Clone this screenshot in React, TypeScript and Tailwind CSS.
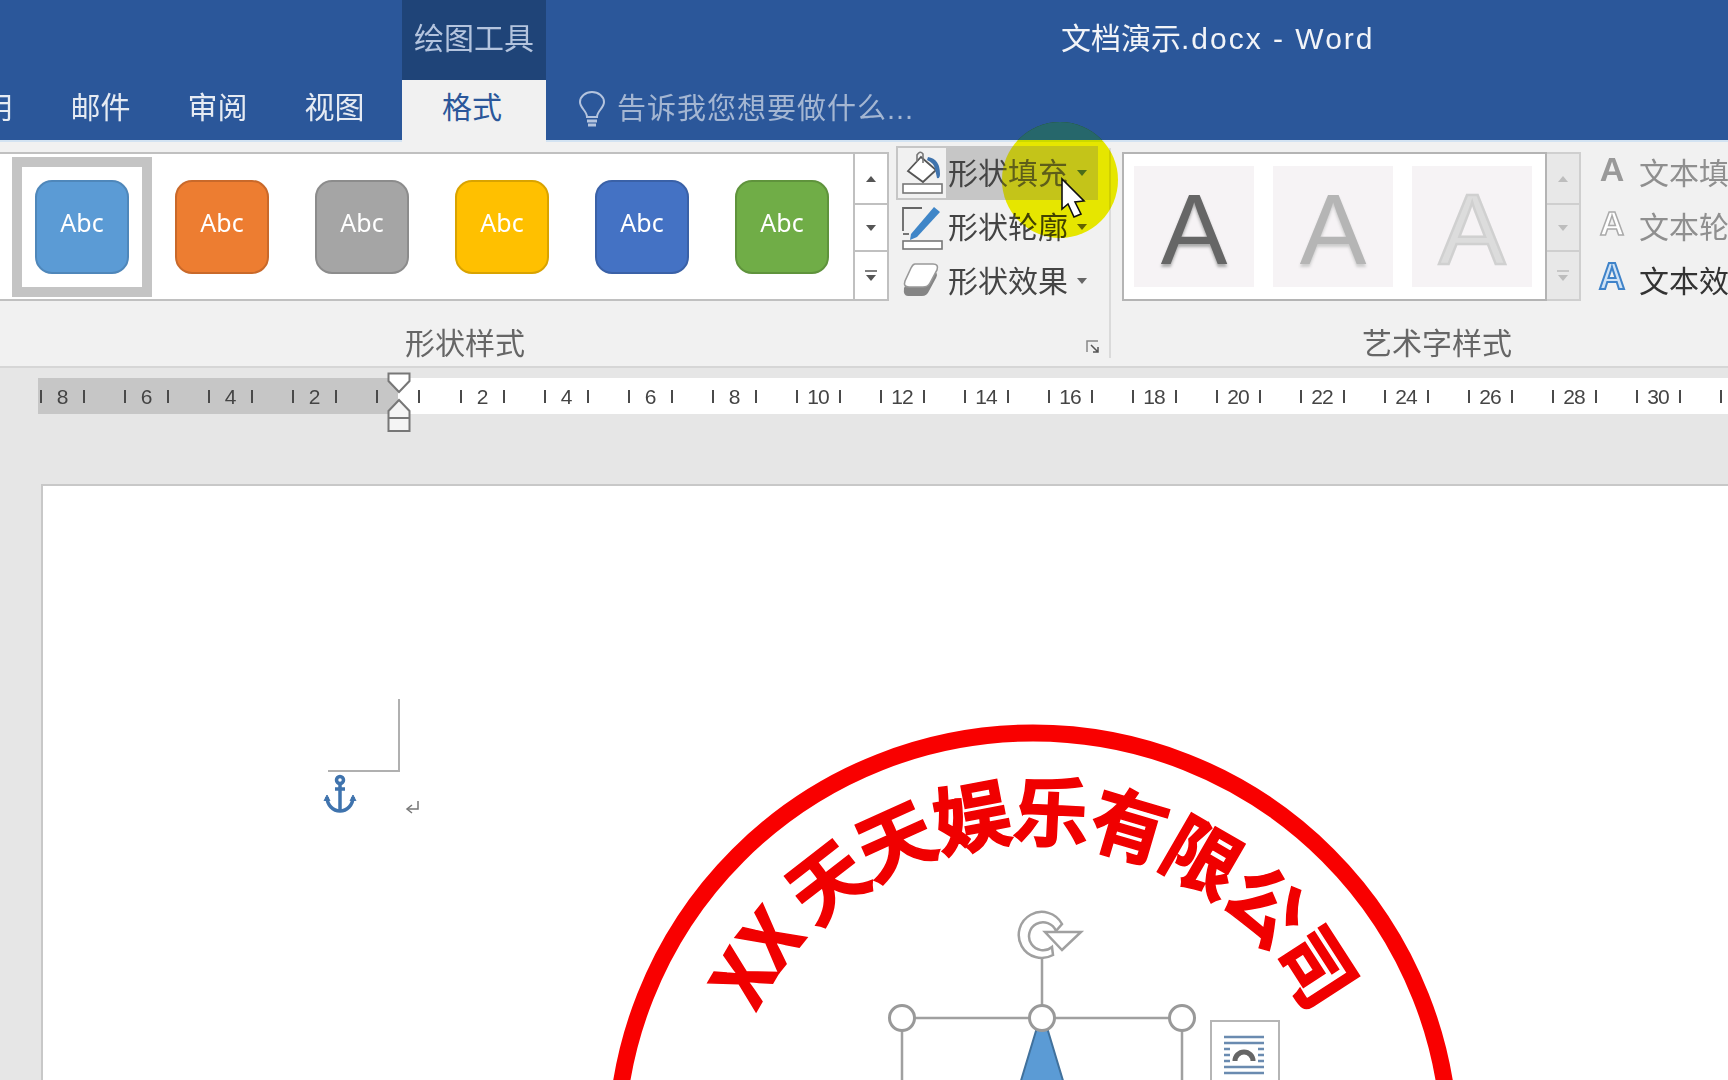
const cjk = "font-['Liberation_Sans','Noto_Sans_CJK_SC',sans-serif]";

const styles = [
  { bg: 'bg-[#5b9bd5]', border: 'border-[#4f87ba]', selected: true },
  { bg: 'bg-[#ed7d31]', border: 'border-[#c9692a]', selected: false },
  { bg: 'bg-[#a5a5a5]', border: 'border-[#8c8c8c]', selected: false },
  { bg: 'bg-[#ffc000]', border: 'border-[#d9a300]', selected: false },
  { bg: 'bg-[#4472c4]', border: 'border-[#3a61a7]', selected: false },
  { bg: 'bg-[#70ad47]', border: 'border-[#5f933c]', selected: false },
];

function Up({ color = '#555' }: { color?: string }) {
  return (
    <svg width="12" height="8" viewBox="0 0 12 8">
      <path d="M6 1 L11 7 H1 Z" fill={color} />
    </svg>
  );
}

function Down({ color = '#555' }: { color?: string }) {
  return (
    <svg width="12" height="8" viewBox="0 0 12 8">
      <path d="M1 1 H11 L6 7 Z" fill={color} />
    </svg>
  );
}

function More({ color = '#555' }: { color?: string }) {
  return (
    <svg width="14" height="14" viewBox="0 0 14 14">
      <path d="M1 2 H13" stroke={color} strokeWidth="1.5" />
      <path d="M2 6 H12 L7 12 Z" fill={color} />
    </svg>
  );
}

function Scroller({ muted }: { muted?: boolean }) {
  const color = muted ? '#bdbdbd' : '#555';
  const line = muted ? 'border-[#cfcfcf]' : 'border-[#c0c0c0]';
  return (
    <div className={`flex h-[149px] w-[34px] flex-col border-2 border-l-0 ${line} ${muted ? 'bg-[#e8e8e8]' : 'bg-white'}`}>
      <div className={`flex h-[51px] items-center justify-center border-b-2 ${line}`}>
        <Up color={color} />
      </div>
      <div className={`flex h-[47px] items-center justify-center border-b-2 ${line}`}>
        <Down color={color} />
      </div>
      <div className="flex flex-1 items-center justify-center">
        <More color={color} />
      </div>
    </div>
  );
}

function FillIcon() {
  return (
    <svg width="46" height="46" viewBox="0 0 46 46">
      <path d="M9 21 L22 7 L37 20 L24 32 Z" fill="#fff" stroke="#555" strokeWidth="1.8" />
      <path d="M18 12 V5 Q21 0 24 4 V13" fill="none" stroke="#777" strokeWidth="1.6" />
      <path d="M29 7 Q41 9 41 24 Q41 29 38 28 L36 19 Q35 13 28 10 Z" fill="#3f73ad" />
      <rect x="4" y="34" width="39" height="9" fill="#fff" stroke="#777" strokeWidth="1.6" />
    </svg>
  );
}

function OutlineIcon() {
  return (
    <svg width="46" height="46" viewBox="0 0 46 46">
      <path d="M23 4 H4 V27" fill="none" stroke="#666" strokeWidth="1.8" />
      <path d="M12 30 L35 3 L41 8 L18 33 L11 36 Z" fill="#3f86c8" />
      <path d="M4 30 H10" stroke="#666" strokeWidth="1.8" />
      <rect x="4" y="37" width="39" height="8" fill="#fff" stroke="#777" strokeWidth="1.6" />
    </svg>
  );
}

function EffectIcon() {
  return (
    <svg width="46" height="46" viewBox="0 0 46 46">
      <path d="M16 14 H34 Q40 14 37 20 L30 33 Q28 38 23 38 H9 Q4 38 5 30 L12 18 Q14 14 16 14 Z" fill="#858585" />
      <path d="M16 6 H34 Q40 6 38 12 L31 25 Q29 29 24 29 H10 Q4 29 6 23 L12 10 Q14 6 16 6 Z" fill="#fff" stroke="#999" strokeWidth="1.6" />
    </svg>
  );
}

function ShapeButton({ label, hover, icon }: { label: string; hover?: boolean; icon: React.ReactNode }) {
  return (
    <div className={`flex h-[54px] w-[202px] items-center ${hover ? 'bg-[#c6c6c6]' : ''}`}>
      <div className={`flex h-[54px] w-[52px] items-center justify-center border-2 ${hover ? 'border-[#c6c6c6] bg-[#f1f1f1]' : 'border-transparent'}`}>
        {icon}
      </div>
      <span className="w-[120px] pt-[2px] text-[30px] leading-none whitespace-nowrap text-[#444]">{label}</span>
      <span className="ml-[8px]">
        <Down color={hover ? '#2b579a' : '#666'} />
      </span>
    </div>
  );
}

function TextButton({ label, color, glyph }: { label: string; color: string; glyph: React.ReactNode }) {
  return (
    <div className="flex h-[54px] items-center">
      <div className="flex w-[54px] justify-center pb-[8px]">{glyph}</div>
      <span className={`pt-[2px] text-[30px] leading-none whitespace-nowrap ${color}`}>{label}</span>
    </div>
  );
}

function RulerCell({ n }: { n: number }) {
  return (
    <div className="flex w-[84px] shrink-0 items-center justify-center">
      <span className="h-[13px] w-[2px] bg-[#4a4a4a]" />
      <span className="w-[41px] text-center text-[21px] leading-none tracking-[-1px] text-[#444]">{n}</span>
      <span className="h-[13px] w-[2px] bg-[#4a4a4a]" />
    </div>
  );
}

function RulerHalf() {
  return (
    <div className="flex w-[42px] shrink-0 items-center justify-start pl-[20px]">
      <span className="h-[13px] w-[2px] bg-[#4a4a4a]" />
    </div>
  );
}

export default function App() {
  const rightNums = [2, 4, 6, 8, 10, 12, 14, 16, 18, 20, 22, 24, 26, 28, 30, 32];
  return (
    <div className={`relative flex h-[1080px] w-[1728px] flex-col overflow-hidden bg-[#e6e6e6] ${cjk}`}>
      {/* Title row */}
      <div className="flex h-[80px] shrink-0 bg-[#2b579a]">
        <div className="ml-[402px] flex w-[144px] items-center justify-center bg-[#1f4478] pb-[4px] text-[30px] text-[#b4c4de]">绘图工具</div>
        <div className="ml-[515px] flex items-center pb-[4px] text-[30px] whitespace-nowrap text-[#f2f4f8]">
          文档演示<span className="tracking-[2px]">.docx - Word</span>
        </div>
      </div>

      {/* Tabs */}
      <div className="flex h-[60px] shrink-0 items-stretch bg-[#2b579a]">
        <div className="ml-[-75px] flex">
          {['引用', '邮件', '审阅', '视图'].map((t) => (
            <div key={t} className="flex w-[117px] items-center justify-center pb-[5px] text-[30px] text-[#e6ebf3]">{t}</div>
          ))}
        </div>
        <div className="relative z-10 mb-[-2px] ml-[9px] flex w-[144px] items-center justify-center bg-[#f1f1f1] pr-[4px] pb-[7px] text-[30px] text-[#2b579a]">格式</div>
        <div className="ml-[32px] flex items-center gap-[11px]">
          <svg width="28" height="38" viewBox="0 0 28 38">
            <path d="M9 26 C9 20 2 17 2 11 A12 10 0 0 1 26 11 C26 17 19 20 19 26 Z" fill="none" stroke="#b4c4de" strokeWidth="2" />
            <path d="M9 30 H19 M10 34 H18" stroke="#b4c4de" strokeWidth="3" />
          </svg>
          <span className="text-[29px] tracking-[1px] whitespace-nowrap text-[#a4b6d2]">告诉我您想要做什么...</span>
        </div>
      </div>

      {/* Ribbon */}
      <div className="flex h-[228px] shrink-0 border-t-2 border-b-2 border-t-[#d3e3f2] border-b-[#d6d6d6] bg-[#f1f1f1]">
        <div className="relative flex w-[1111px] shrink-0 flex-col">
          <div className="mt-[10px] flex items-start">
            <div className="flex h-[149px] w-[855px] items-center border-y-2 border-r-2 border-[#c0c0c0] bg-white pl-[12px]">
              {styles.map((s, i) => (
                <div key={i} className={`flex h-[140px] w-[140px] shrink-0 items-center justify-center ${s.selected ? 'border-[10px] border-[#c4c4c4]' : ''}`}>
                  <div className={`flex h-[94px] w-[94px] items-center justify-center rounded-[17px] border-2 pb-[8px] font-['Noto_Sans',sans-serif] text-[25px] text-white ${s.bg} ${s.border}`}>Abc</div>
                </div>
              ))}
            </div>
            <Scroller />
            <div className="ml-[7px] -mt-[6px] flex flex-col">
              <ShapeButton label="形状填充" hover icon={<FillIcon />} />
              <ShapeButton label="形状轮廓" icon={<OutlineIcon />} />
              <ShapeButton label="形状效果" icon={<EffectIcon />} />
            </div>
          </div>
          <div className="absolute top-[184px] left-[0px] w-[930px] text-center text-[30px] leading-[36px] text-[#666]">形状样式</div>
          <svg className="absolute right-[11px] bottom-[12px]" width="14" height="14" viewBox="0 0 14 14">
            <path d="M1 12 V1 H12" fill="none" stroke="#888" strokeWidth="1.5" />
            <path d="M5 5 L12 12 M12 7 V12 H7" fill="none" stroke="#555" strokeWidth="1.5" />
          </svg>
          <div className="absolute top-[6px] right-0 bottom-[8px] w-[2px] bg-[#dadada]" />
        </div>

        <div className="relative flex flex-1 flex-col">
          <div className="mt-[10px] ml-[11px] flex items-start">
            <div className="flex h-[149px] w-[425px] items-center gap-[19px] border-2 border-[#b4b4b4] bg-white pl-[10px]">
              {[
                'text-[#666] [text-shadow:0_3px_3px_#aaa]',
                'text-[#b5b5b5] [text-shadow:0_3px_3px_#ccc]',
                'text-[#dcdcdc] [-webkit-text-stroke:2.5px_#d0d0d0]',
              ].map((c) => (
                <div key={c} className={`flex h-[121px] w-[120px] shrink-0 items-center justify-center bg-[#f6f3f5] pt-[4px] text-[100px] leading-none ${c}`}>A</div>
              ))}
            </div>
            <Scroller muted />
            <div className="ml-[4px] -mt-[6px] flex flex-col">
              <TextButton label="文本填充" color="text-[#8f8f8f]" glyph={<span className="text-[34px] leading-none font-bold text-[#999]">A</span>} />
              <TextButton label="文本轮廓" color="text-[#8f8f8f]" glyph={<span className="text-[34px] leading-none font-bold text-[#fff] [-webkit-text-stroke:1.5px_#aaa]">A</span>} />
              <TextButton label="文本效果" color="text-[#333]" glyph={<span className="text-[36px] leading-none font-bold text-[#cfe2f5] [-webkit-text-stroke:2px_#3f83c9]">A</span>} />
            </div>
          </div>
          <div className="absolute top-[184px] left-[9px] w-[634px] text-center text-[30px] leading-[36px] text-[#666]">艺术字样式</div>
        </div>
      </div>

      {/* Ruler */}
      <div className="mt-[10px] flex h-[36px] shrink-0 pl-[38px]">
        <div className="flex w-[360px] shrink-0 justify-end overflow-hidden bg-[#c6c6c6]">
          {[8, 6, 4, 2].map((n) => (
            <RulerCell key={n} n={n} />
          ))}
          <RulerHalf />
        </div>
        <div className="flex flex-1 overflow-hidden bg-white">
          <RulerHalf />
          {rightNums.map((n) => (
            <RulerCell key={n} n={n} />
          ))}
        </div>
      </div>

      {/* Indent markers over the ruler */}
      <svg className="absolute top-[372px] left-[387px]" width="24" height="62" viewBox="0 0 24 62">
        <path d="M1.5 1.5 H22.5 V9 L12 20 L1.5 9 Z" fill="#fff" stroke="#777" strokeWidth="2" />
        <path d="M12 28 L22.5 39 V59 H1.5 V39 Z" fill="#f4f4f4" stroke="#777" strokeWidth="2" />
        <path d="M1.5 46 H22.5" stroke="#777" strokeWidth="2" />
      </svg>

      {/* Page */}
      <div className="mt-[70px] ml-[41px] flex-1 border-t-2 border-l-2 border-[#c8c8c8] bg-white" />

      {/* Free canvas: shapes on the page */}
      <svg className="absolute top-0 left-0" width="1728" height="1080" viewBox="0 0 1728 1080" pointerEvents="none">
        <defs>
          <path id="stampArc" d="M730 1203.5 A308 308 0 1 1 1336 1203.5" />
          <clipPath id="spot">
            <circle cx="1060" cy="180" r="58" />
          </clipPath>
        </defs>

        <path d="M399 699 V771 H328" fill="none" stroke="#b0b0b0" strokeWidth="2" />
        <path d="M408 809 H418 V801" fill="none" stroke="#777" strokeWidth="1.5" />
        <path d="M412 805 L407 809 L412 813" fill="none" stroke="#777" strokeWidth="1.5" />

        {/* Anchor */}
        <g fill="none" stroke="#3f73ad" strokeWidth="3.5">
          <circle cx="340" cy="780" r="3.5" />
          <path d="M340 784 V811 M335 789 H345" />
          <path d="M327 797 C327 805 333 811 340 811 C347 811 353 805 353 797" />
          <path d="M324 801 L327 795 L330 801 M350 801 L353 795 L356 801" fill="#3f73ad" strokeWidth="1" />
        </g>

        {/* Stamp */}
        <circle cx="1033" cy="1150" r="417" fill="none" stroke="#f90000" strokeWidth="17" />
        <text fill="#f00000" stroke="#f00000" strokeWidth="1.5" fontFamily="'Noto Sans CJK SC', sans-serif" fontWeight="700" fontSize="76" textAnchor="middle" letterSpacing="-3">
          <textPath href="#stampArc" startOffset="50%">XX 天天娱乐有限公司</textPath>
        </text>

        {/* Selected shape */}
        <path d="M1020 1084 L1042 1011 L1064 1084 Z" fill="#5b9bd5" stroke="#41719c" strokeWidth="2" />
        <path d="M902 1018 H1182 M902 1018 V1084 M1182 1018 V1084 M1042 958 V1018" fill="none" stroke="#a0a0a0" strokeWidth="2.5" />
        {[902, 1042, 1182].map((x) => (
          <circle key={x} cx={x} cy="1018" r="12.5" fill="#fff" stroke="#999" strokeWidth="3" />
        ))}
        <path d="M1053 955 A23 23 0 1 1 1062 924 L1056 931 A14 14 0 1 0 1052 947 Z" fill="#fff" stroke="#a0a0a0" strokeWidth="2.5" />
        <path d="M1045 932 H1081 L1062 950 Z" fill="#fff" stroke="#a0a0a0" strokeWidth="2.5" />

        <rect x="1211" y="1021" width="68" height="70" fill="#fff" stroke="#b5b5b5" strokeWidth="2" />
        <path d="M1224 1037 H1264 M1224 1043 H1264 M1224 1067 H1264 M1224 1073 H1264 M1224 1049 H1230 M1258 1049 H1264 M1224 1055 H1230 M1258 1055 H1264 M1224 1061 H1230 M1258 1061 H1264" stroke="#6a8bb0" strokeWidth="2.5" />
        <path d="M1235 1061 A9 9 0 0 1 1253 1061" fill="none" stroke="#666" strokeWidth="5" />

        {/* Cursor highlight */}
        <circle cx="1060" cy="180" r="58" fill="#f4f400" style={{ mixBlendMode: 'multiply' }} />
        <rect x="1000" y="118" width="120" height="22" fill="#26676b" clipPath="url(#spot)" />
        <rect x="948" y="146" width="150" height="54" fill="#e6e18c" fillOpacity="0.18" clipPath="url(#spot)" />
        <path d="M1062 179 V209 L1068 204 L1074 217 L1081 214 L1075 202 L1084 201 Z" fill="#fff" stroke="#111" strokeWidth="1.6" />
      </svg>
    </div>
  );
}
